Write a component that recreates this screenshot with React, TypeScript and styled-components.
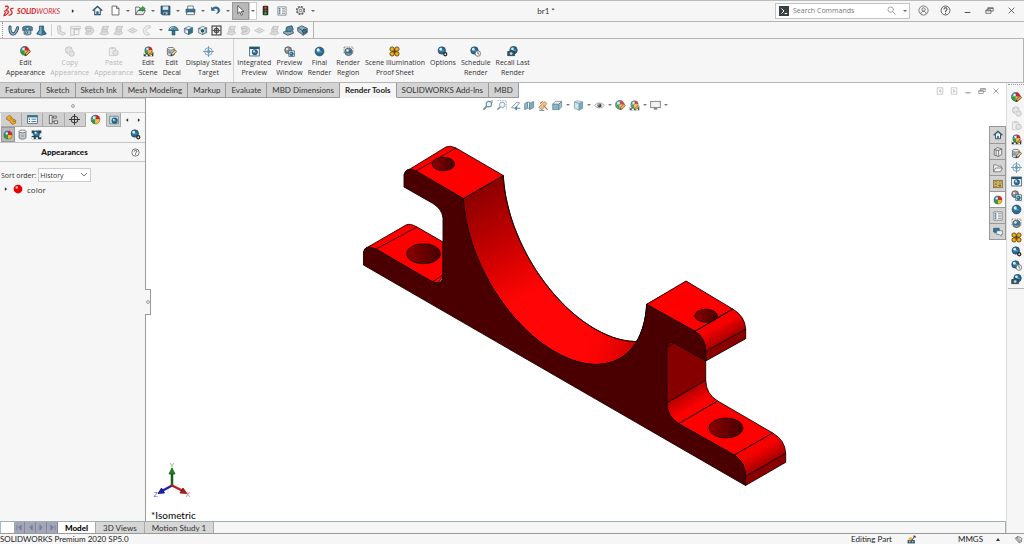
import React from "react";
import styled, { createGlobalStyle, css } from "styled-components";

const ink = "#333";
const line = "#b4b4b4";
const panel = "#f6f6f6";
const blue = "#2f7396";

const Global = createGlobalStyle`
  * { box-sizing: border-box; }
  html, body { margin: 0; padding: 0; background: #fff; }
  body, button, input, select { font-family: "Open Sans", "Noto Sans", sans-serif; font-size: 7px; color: ${ink}; }
  button { border: 0; padding: 0; margin: 0; background: none; }
  svg { display: block; }
`;

const labelFont = css`font-family: Lato, "Open Sans", sans-serif; font-size: 8px;`;

/* ---------- icons, all on a 16 unit grid ---------- */

const Ball = ({ x = 8, y = 8, r = 6 }: { x?: number; y?: number; r?: number }) => (
  <g>
    <circle cx={x} cy={y} r={r} fill="#2a6990" stroke="#173a52" strokeWidth="0.8" />
    <path d={`M${x - r * 0.7} ${y + r * 0.2}a${r * 0.8} ${r * 0.8} 0 0 1 ${r * 1.4} 0z`} fill="#4c9cc4" />
    <circle cx={x - r * 0.3} cy={y - r * 0.35} r={r * 0.35} fill="#dff0f8" />
  </g>
);
const ColorBall = ({ x = 8, y = 8, r = 6 }: { x?: number; y?: number; r?: number }) => (
  <g>
    <path d={`M${x} ${y}V${y - r}A${r} ${r} 0 0 0 ${x - r} ${y}z`} fill="#2e86b8" />
    <path d={`M${x} ${y}V${y - r}A${r} ${r} 0 0 1 ${x + r} ${y}z`} fill="#dd2222" />
    <path d={`M${x} ${y}H${x - r}A${r} ${r} 0 0 0 ${x} ${y + r}z`} fill="#2f9c3c" />
    <path d={`M${x} ${y}H${x + r}A${r} ${r} 0 0 1 ${x} ${y + r}z`} fill="#f2c02c" />
    <circle cx={x} cy={y} r={r} fill="none" stroke="#444" strokeWidth="0.7" />
    <circle cx={x - r * 0.3} cy={y - r * 0.4} r={r * 0.3} fill="#fff" opacity="0.85" />
  </g>
);
const Pencil = ({ body = "#e9a13b" }: { body?: string }) => (
  <g>
    <path d="M7 14l1-3.500 5-5 2.500 2.500-5 5z" fill={body} stroke="#333" strokeWidth="0.9" />
    <path d="M7 14l.8-2.500 1.700 1.700z" fill="#222" />
  </g>
);
const Cube = ({ front = "#a8cbdc", side = blue, top = "#e3eef3", edge = "#3c5766" }) => (
  <g stroke={edge} strokeWidth="0.9" strokeLinejoin="round">
    <path d="M2 5l6-3 6 2-6 3z" fill={top} />
    <path d="M2 5l6 2v7l-6-3z" fill={front} />
    <path d="M8 7l6-3v7l-6 3z" fill={side} />
  </g>
);

const icons: Record<string, React.ReactNode> = {
  home: <g fill="none" stroke="#3b4a54" strokeWidth="1.500"><path d="M4 7v7h8V7" fill="#fff" /><path d="M1 8.500L8 2l7 6.500" stroke="#29536c" strokeWidth="2" /><path d="M7 14v-4h2v4" fill={blue} stroke={blue} /></g>,
  page: <path d="M3 1.500h6.500L13 5v9.500H3zM9.500 1.500V5H13" fill="#fff" stroke="#555" strokeWidth="1.200" />,
  open: <g stroke="#444" strokeWidth="1.100"><path d="M1 14V3h5l1.500 2H12v3" fill="#fff" /><path d="M1 14l3-6h11l-3 6z" fill="#e6e6e6" /><path d="M6 8c0-3 2-4 5-4V2l4 3.500L11 9V7c-2 0-3.500.3-5 1z" fill="#3fae49" stroke="#27752f" /></g>,
  save: <g><path d="M1.500 1.500h13v13h-11l-2-2z" fill="#2c6583" stroke="#24404f" /><path d="M4 2h8v5H4z" fill="#dfeaf0" /><path d="M5 10h6v4H5z" fill="#a9bdc8" /><path d="M6 11h2v3H6z" fill="#24404f" /></g>,
  print: <g stroke="#2f4a58" strokeWidth="1"><path d="M4 6V1.500h8V6" fill="#fff" /><path d="M1.500 6h13v5h-13z" fill="#387a9d" /><path d="M3 10h10l1 4H2z" fill="#fff" /></g>,
  undo: <path d="M2 3v5h5L5.300 6.300C8 4 12 5.500 11.500 9c-.2 1.500-1 2.500-2.500 3.500 3.500-.5 5.500-2.500 5.300-5C14 3 8 1 3.800 4.500z" fill="#2e6d93" stroke="#1f4d69" strokeWidth="0.600" />,
  cursor: <path d="M4 1v11.500l3-2.500 2 5 2-1-2-4.500h4z" fill="#fff" stroke="#333" strokeWidth="1" />,
  traffic: <g><rect x="4" y="1" width="8" height="14" rx="1.500" fill="#2b2b2b" /><circle cx="8" cy="4" r="1.900" fill="#e33a2d" /><circle cx="8" cy="8" r="1.600" fill="#8a7a26" /><circle cx="8" cy="12" r="1.900" fill="#35a847" /></g>,
  list: <g><rect x="1.500" y="1.500" width="13" height="13" fill="#fff" stroke="#4d5a62" /><path d="M2 2h4v12H2z" fill="#b9d0dc" /><path d="M3 4.500h2M3 8h2M3 11.500h2" stroke="#24536d" strokeWidth="1.500" /><path d="M8 4.500h5M8 8h5M8 11.500h5" stroke="#555" strokeWidth="1.200" /></g>,
  tree: <g><rect x="1" y="2" width="14" height="12" fill="#fff" stroke="#24536d" /><path d="M1 2h14v3H1z" fill="#2f7396" /><path d="M2.500 7.500h2M2.500 11h2" stroke="#24536d" strokeWidth="1.600" /><path d="M6.500 7.500h7M6.500 11h7" stroke="#2f7396" strokeWidth="1.400" /></g>,
  gear: <g fill="none" stroke="#555"><circle cx="8" cy="8" r="5.700" strokeWidth="2" strokeDasharray="2.600 1.900" /><circle cx="8" cy="8" r="4.600" strokeWidth="1" /><circle cx="8" cy="8" r="1.800" strokeWidth="1.200" /></g>,
  user: <g fill="none" stroke="#555" strokeWidth="1.100"><circle cx="8" cy="8" r="6.700" /><circle cx="8" cy="6.500" r="2.400" /><path d="M4 13c.5-5 7.500-5 8 0" /></g>,
  help: <g fill="none" stroke="#444" strokeWidth="1.200"><circle cx="8" cy="8" r="6.500" /><path d="M5.800 6.300c0-3 4.600-3 4.400-.1C10 8 8 7.800 8 10M8 11.200v1.400" strokeWidth="1.500" /></g>,
  min: <path d="M3 11.500h10" stroke="#444" strokeWidth="1.700" />,
  restore: <g fill="none" stroke="#444" strokeWidth="1.200"><path d="M1.500 7h9v6h-9zM1.500 8.500h9" /><path d="M5 7V3h9.500v6h-4M5 4.500h9.500" /></g>,
  close: <path d="M3 3l10 10M13 3L3 13" stroke="#444" strokeWidth="1.400" />,
  prompt: <g><rect x="0" y="0" width="16" height="16" fill="#3a3f42" /><path d="M4 4l4 4-4 4M9 12h4" fill="none" stroke="#fff" strokeWidth="1.600" /></g>,
  search: <g fill="none" stroke="#777" strokeWidth="1.200"><circle cx="6.500" cy="6.500" r="4.800" /><path d="M10 10l5 5" /></g>,
  dockL: <path d="M2.500 1.500h11v13h-11zM9.500 5v6L6 8z" fill="none" stroke="#777" />,
  dockR: <path d="M2.500 1.500h11v13h-11zM7 5v6l3.500-3z" fill="none" stroke="#777" />,

  clip: <g fill="none" strokeLinecap="round"><path d="M3 3c-1 8 3 12 7 9 3-3 3-5 4-8" stroke="#31505f" strokeWidth="4.500" /><path d="M3 3c-1 8 3 12 7 9 3-3 3-5 4-8" stroke="#7fb0c8" strokeWidth="1.800" /></g>,
  sweep: <g stroke="#2b4a5a"><path d="M1 3c4-2 10-2 14 0v5c-4-2-10-2-14 0z" fill="#4c8dac" /><path d="M3 8c3-1 7-1 10 0v5c-3 2-7 2-10 0z" fill="#8fb9cd" /><path d="M6 4h4v3H6zM5 10h3v2H5z" fill="#fff" /></g>,
  loft: <g stroke="#24475a"><path d="M5 1.500h6V7l4 6-7 2-7-2 4-6z" fill="#2f7396" /><path d="M6 2h2v12l-5-1.500 3-5z" fill="#7fb0c8" stroke="none" /></g>,
  ghostA: <g fill="#e4e4e4" stroke="#b8b8b8"><path d="M2 2l3-1 1 8 8 3-3 3-8-3z" /><path d="M5 1l2 1v6" /></g>,
  ghostB: <g fill="#f2f2f2" stroke="#bbb"><path d="M1 2h14v4H6v9H1zM6 6h7v8H6zM1 5h14" /></g>,
  ghostC: <g fill="#dedede" stroke="#b5b5b5"><path d="M2 3c6-3 12 0 12 5s-6 7-12 5l1-3c3 1 6 0 6-3S6 4 2 6z" /><path d="M3 5h7v4H3z" /></g>,
  ghostD: <g fill="#dedede" stroke="#b8b8b8"><path d="M6 2h8l-2 4v3l2 3-5 2.500L1 13l3-3V6z" /><path d="M6 2v5l6-1M4 10h6l2-1" /></g>,
  ghostE: <g fill="#e8e8e8" stroke="#bdbdbd"><path d="M1 8l7-4 7 4-7 4z" /><path d="M4.500 10l7-4M4.500 6l7 4" /></g>,
  ghostF: <path d="M12 1C4 0 1 6 2 10s5 6 9 4l-2-3c-5 0-5-6 3-7z" fill="#ececec" stroke="#bdbdbd" />,
  dome: <g stroke="#24475a"><path d="M1 8c1-8 13-8 14 0z" fill="#4d91b1" /><path d="M6 8h4v6.500H6z" fill="#2f7396" /><path d="M3 6c2-3 4-3 5-3" stroke="#fff" fill="none" /></g>,
  cube: <g><Cube /><path d="M4 8l3 1v3l-3-1z" fill="#fff" /></g>,
  hole: <g><Cube front="#d5dde1" side="#87a9b9" /><circle cx="8" cy="8.500" r="3.200" fill="#24536d" stroke="#fff" /></g>,
  wrap: <g fill="none" stroke="#333"><rect x="1.500" y="1.500" width="13" height="13" strokeWidth="1.500" fill="#eee" /><circle cx="8" cy="8" r="3.500" strokeWidth="1.200" fill="#999" /><path d="M8 2v12M2 8h12" /></g>,
  slab: <g stroke="#2b3f4a"><path d="M1 10l9-2 5 2-8 4z" fill="#fff" /><path d="M5 3l8-2 2 6-5 3-6-1z" fill="#4b8aa8" /><path d="M1 10v2l6 3 8-3v-2" fill="#8fa8b4" /></g>,
  block: <g stroke="#2b3f4a"><path d="M1 4l6-3 8 4v6l-6 4-8-6z" fill="#86afc2" /><path d="M1 4l8 5v6M9 9l6-4" fill="none" /><circle cx="11" cy="9" r="3" fill={blue} /></g>,

  appearance: <g><ColorBall x={7} y={7} r={6.500} /><Pencil /></g>,
  ghostBall: <g><circle cx="7" cy="6" r="5" fill="#d8d8d8" stroke="#bbb" /><circle cx="11" cy="11" r="4" fill="#e2e2e2" stroke="#bbb" /><path d="M7 1v10M2 6h10" stroke="#f4f4f4" /></g>,
  ghostPaste: <g><path d="M2 3h9v11H2z" fill="#eee" stroke="#c4c4c4" /><path d="M4 1.500h5v3H4z" fill="#d0d0d0" /><circle cx="11" cy="10" r="4" fill="#e2e2e2" stroke="#bbb" /></g>,
  scene: <g><path d="M1 10h14v5H1z" fill="#333" /><path d="M1 10h3v2H1zM7 10h3v2H7zM4 12.500h3V15H4zM10 12.500h3V15h-3z" fill="#fff" /><ColorBall y={6.500} r={5.500} /><path d="M8 13l5-5 2 2-5 4z" fill="#e9a13b" stroke="#333" strokeWidth="0.700" /></g>,
  decal: <g><path d="M2 4v8c0 3 10 3 10 0V4" fill="#d2d8dc" stroke="#444" /><ellipse cx="7" cy="4" rx="5" ry="2" fill="#f4f4f4" stroke="#444" /><path d="M3 7h5v4H3z" fill="#7d9dad" /><Pencil body="#eac680" /></g>,
  target: <g fill="none" stroke="#4b87a6"><circle cx="8" cy="8" r="5.500" strokeWidth="1" /><circle cx="8" cy="8" r="2.200" strokeWidth="1" /><path d="M8 0v16M0 8h16" strokeWidth="1" /></g>,
  integrated: <g><rect x="1" y="1.500" width="14" height="13" fill="#fff" stroke="#24536d" strokeWidth="1.200" /><path d="M1 1.500h14v3H1z" fill="#24536d" /><Ball x={8.500} y={9} r={4} /></g>,
  preview: <g><circle cx="6" cy="6" r="5" fill="#8b9298" stroke="#444" /><circle cx="4.500" cy="4.500" r="1.600" fill="#eee" /><rect x="7" y="7" width="8" height="8" fill="#dcebf2" stroke="#24536d" /><Ball x={11} y={11.500} r={2.600} /></g>,
  ball: <Ball r={6.500} />,
  region: <g><rect x="1.500" y="1.500" width="13" height="9" fill="none" stroke="#555" strokeDasharray="2 1.500" /><circle cx="8" cy="8.500" r="5.500" fill="#8d959b" stroke="#444" /><path d="M3.500 5.500h9v5h-9z" fill="#2c7196" /><circle cx="6.500" cy="6.500" r="1.800" fill="#e5f1f6" /></g>,
  proof: <g fill="#eeb021" stroke="#4a3000" strokeWidth="1.100"><circle cx="4.500" cy="4.500" r="3.200" /><circle cx="11.500" cy="4.500" r="3.200" /><circle cx="4.500" cy="11.500" r="3.200" /><circle cx="11.500" cy="11.500" r="3.200" /><path d="M5 8h6M8 5v6" /></g>,
  options: <g><Ball x={7} y={6.500} r={5.500} /><circle cx="12" cy="12" r="2.300" fill="#ddd" stroke="#222" strokeWidth="1.700" /></g>,
  schedule: <g><Ball x={6.500} y={6.500} r={5.500} /><circle cx="11.500" cy="11" r="4" fill="#f4f4f4" stroke="#555" /><path d="M11.500 8.500V11l2 1" fill="none" stroke="#333" /></g>,
  recall: <g><Ball x={9.500} y={6} r={5.500} /><path d="M1 8h4l1-1.500h2L9 8h2v6H1z" fill="#35586b" stroke="#1d3440" /><circle cx="6" cy="11" r="2" fill="#b9d6e4" /></g>,

  part: <g fill="#efb22d" stroke="#8a5a00"><path d="M1 5l4-3 3 2 1 3 5 2v4l-4 2-3-2-1-3-5-2z" /><path d="M5 6l3 2M9 10l4 1" /></g>,
  config: <g fill="none" stroke="#555" strokeWidth="1.200"><path d="M2 2h4v12H2zM8 3h4v3H8zM9 10h5v4H9zM6 5h2M6 11h3" fill="#eee" /></g>,
  dim: <g fill="none" stroke="#333" strokeWidth="1.400"><circle cx="8" cy="8" r="5" /><path d="M8 0v16M0 8h16" /></g>,
  cam: <g><path d="M1 2h14v12H1z" fill="#cfe0e8" stroke="#3e6b82" /><Ball x={9} y={9} r={4.500} /></g>,
  cyl: <g><path d="M3 3.500v9c0 3 10 3 10 0v-9" fill="#c9ced2" stroke="#555" /><ellipse cx="8" cy="3.500" rx="5" ry="2" fill="#f4f4f4" stroke="#555" /><path d="M5.500 8h5v4h-5z" fill="#9db6c2" /></g>,
  sceneBlue: <g><path d="M1 2h14v13H1z" fill="#dbe7ed" /><path d="M1 2h4v4H1zM10 2h5v4h-5zM1 10h14v5H1z" fill="#2b4350" /><path d="M1 12h3v3H1zM7 12h3v3H7zM12 10h3v2h-3z" fill="#fff" /><Ball y={7} r={4.500} /></g>,
  bookBox: <g fill="#ededed" stroke="#444"><path d="M2 4l5-3 7 2v9l-5 3-7-2zM2 4l7 2 5-3M9 6v9M5 5v9" /></g>,
  folder: <path d="M1 14V3h5l1.500 2H13v3M1 14l3-6h11l-3 6z" fill="#f2f2f2" stroke="#555" />,
  palette: <g><rect x="1" y="2" width="14" height="12" fill="#f0bd3a" stroke="#6d531b" /><path d="M3 4h3v3H3zM10 4h3v3h-3zM3 9h3v3H3z" fill="#fff" stroke="#555" /><path d="M9 9h4v3H9z" fill={blue} /></g>,
  chat: <g><path d="M1 2h9v6H5l-2 2V8H1z" fill="#2f7396" stroke="#24536d" /><path d="M6 6h9v6h-2v3l-3-3H6z" fill="#f2f6f8" stroke="#44687a" /></g>,

  zoomFit: <g fill="none" stroke="#557a8d" strokeWidth="1.600"><circle cx="10" cy="6" r="4" fill="#e7f1f6" /><path d="M7 9l-5 5" strokeWidth="2.400" /><path d="M13 1h2v3" strokeWidth="1" /></g>,
  zoomArea: <g fill="none" stroke="#6b8b9b" strokeWidth="1.200"><path d="M2 1h13v13" strokeDasharray="2 1.500" /><circle cx="9" cy="7" r="4" fill="#e7f1f6" /><path d="M6 10l-4 4" strokeWidth="2.200" /></g>,
  prevView: <g fill="none" stroke="#718893" strokeWidth="1.300"><path d="M2 11l8-8 4 1-6 8z" fill="#f2f2f2" /><path d="M15 12H8M10 9.500L7.500 12l2.500 2.500" stroke={blue} strokeWidth="1.800" /></g>,
  section: <g stroke="#3f5f6e"><path d="M1 5l4-2v9l-4 2z" fill="#7fb3cb" /><path d="M8 5l6-3v9l-6 3z" fill="#5ba2c3" /><path d="M5 3h3v9H5z" fill="#e6eef2" /></g>,
  dynamic: <g><path d="M1 11L9 2l4 3-7 9z" fill="#e9b877" stroke="#a66b2c" /><path d="M8 8l6 6M3 5l4-3" stroke="#c8552b" strokeWidth="1.700" /><path d="M2 15h7" stroke={blue} strokeWidth="1.500" /></g>,
  orient: <g stroke="#46636f"><path d="M1 6h9v8H1z" fill="#6aacc9" /><path d="M1 6l4-4h9l-4 4z" fill="#e6eef2" /><path d="M10 6l4-4v8l-4 4z" fill="#9bb9c6" /></g>,
  style: <g stroke="#567f92"><path d="M2 3l5-2 7 2-5 2z" fill="#e2eef4" /><path d="M2 3l7 2v10l-7-3z" fill="#c9dfe9" /><path d="M9 5l5-2v9l-5 3z" fill="#5a9bb9" /></g>,
  eye: <g><path d="M1 8c3-5 11-5 14 0-3 4.500-11 4.500-14 0z" fill="#eee" stroke="#777" /><circle cx="8" cy="8" r="3" fill="#333" /><circle cx="7" cy="7" r="1" fill="#fff" /></g>,
  monitor: <g><rect x="1" y="2" width="14" height="9" fill="#eef2f4" stroke="#666" strokeWidth="1.300" /><path d="M6 11h4l1 3H5z" fill="#777" /></g>,
  red: <g><circle cx="8" cy="8" r="7" fill="#e80000" /><circle cx="6" cy="5.500" r="2" fill="#ffb3b3" /></g>,
  right: <path d="M5 3l6 5-6 5z" fill="#333" />,
  left: <path d="M11 3L5 8l6 5z" fill="#333" />,
  rebuild: <g><path d="M1 9h13v6H1z" fill="#3a5c6d" /><path d="M3 5l5-1 2 3-3 3-4-1z" fill="#f0b429" /><path d="M8 10l6-8M11 2h3.500v3" stroke="#222" strokeWidth="1.500" fill="none" /><path d="M4 11h2v2H4zM9 11h2v2H9z" fill="#e8e8e8" /></g>,
  tag: <g fill="#ddd" stroke="#444"><path d="M2 6l5-4 7 4-1 6-4 2z" /><circle cx="6" cy="5.500" r="1.300" /><path d="M8 8l4 2M7 10l3 2" /></g>,
};

const Icon = ({ name, size = 11 }: { name: string; size?: number }) => (
  <svg width={size} height={size} viewBox="0 0 16 16" aria-hidden="true">{icons[name]}</svg>
);

/* ---------- shell ---------- */

const Shell = styled.div`
  min-height: 100vh;
  display: flex;
  flex-direction: column;
  background: ${panel};
  overflow: hidden;
`;
const TitleBar = styled.header`
  height: 22px;
  display: flex;
  align-items: center;
  border-top: 1px solid #bbb;
  border-bottom: 1px solid ${line};
  padding: 0 5px 1px 0;
`;
const Brand = styled.div`
  width: 68px;
  padding-left: 3px;
  display: flex;
  align-items: center;
  gap: 3px;
  color: #d5262c;
  font: italic 7px Lato, sans-serif;
  b { font-weight: 900; }
`;
const ToolButton = styled.button<{ $w?: number; $h?: number; $active?: boolean }>`
  flex: none;
  width: ${(p) => p.$w ?? 16}px;
  height: ${(p) => p.$h ?? 16}px;
  display: flex;
  align-items: center;
  justify-content: center;
  ${(p) => p.$active && css`background: #b8b8b8; outline: 1px solid #999; outline-offset: -1px;`}
`;
const CaretButton = styled.button<{ $boxed?: boolean; $w?: number }>`
  flex: none;
  width: ${(p) => p.$w ?? 9}px;
  height: ${(p) => (p.$boxed ? 18 : 12)}px;
  display: flex;
  align-items: center;
  justify-content: center;
  ${(p) => p.$boxed && css`border: 1px solid #ccc; background: #fff;`}
  &::after { content: ""; border: 2px solid transparent; border-top-color: #666; border-bottom: 0; }
`;
const Spacer = styled.span<{ $w: number }>`flex: none; width: ${(p) => p.$w}px;`;
const DocTitle = styled.div`flex: 1; text-align: center; ${labelFont}`;
const SearchBox = styled.label`
  width: 135px;
  height: 16px;
  display: flex;
  align-items: center;
  gap: 4px;
  padding-left: 3px;
  background: #fff;
  border: 1px solid #c4c4c4;
`;
const SearchInput = styled.input`
  flex: 1;
  min-width: 0;
  border: 0;
  padding: 0;
  background: none;
  outline: 0;
  &::placeholder { color: #777; opacity: 1; }
`;
const WindowButtons = styled.div`display: flex; gap: 6px; padding-left: 5px;`;

const FeatureBar = styled.div`
  height: 17px;
  display: flex;
  border-bottom: 1px solid ${line};
`;
const FeatureGroup = styled.div`
  width: 312px;
  display: flex;
  align-items: center;
  justify-content: space-between;
  margin-left: 2px;
  padding: 0 3px;
  border-left: 1px dotted #999;
  border-right: 1px solid ${line};
`;
const Rule = styled.span<{ $h: number; $m?: number }>`
  flex: none;
  width: 1px;
  height: ${(p) => p.$h}px;
  margin: 0 ${(p) => p.$m ?? 0}px;
  background: #cfcfcf;
`;

const Ribbon = styled.nav`
  height: 44px;
  display: flex;
  align-items: flex-start;
  padding: 0 3px;
  border-bottom: 1px solid ${line};
  border-right: 1px solid ${line};
`;
const RibbonButton = styled.button`
  flex: none;
  padding: 7px 2px 0 3px;
  display: flex;
  flex-direction: column;
  align-items: center;
  gap: 1px;
  line-height: 10px;
  white-space: pre-line;
  &:disabled { color: #b8b8b8; }
`;

const Body = styled.div`flex: 1; display: flex; min-height: 0;`;
const Main = styled.div`flex: 1; min-width: 0; display: flex; flex-direction: column;`;
const TabRow = styled.div`
  height: 15px;
  display: flex;
  background: #fff;
`;
const Tab = styled.button<{ $active?: boolean }>`
  flex: none;
  padding: 0 5px;
  background: #d3d3d3;
  border-right: 1px solid #999;
  border-bottom: 1px solid #999;
  line-height: 12px;
  ${labelFont}
  ${(p) => p.$active && css`background: ${panel}; border-bottom-color: ${panel}; font-weight: 700; color: #222;`}
`;
const DocButtons = styled.div`margin-left: auto; display: flex; padding-right: 3px; opacity: 0.75;`;

const Work = styled.div`flex: 1; display: flex; min-height: 0;`;
const Side = styled.aside`
  position: relative;
  z-index: 1;
  flex: none;
  width: 146px;
  border-right: 1px solid #999;
  background: ${panel};
`;
const SideGrip = styled.div`
  height: 15px;
  display: grid;
  place-items: center;
  border-top: 1px solid #c9d3d8;
  border-bottom: 1px solid #ccc;
`;
const Dot = styled.i`width: 4px; height: 4px; border-radius: 50%; border: 1px solid #aaa; background: #ddd;`;
const SplitHandle = styled.button`
  position: absolute;
  left: 100%;
  top: 191px;
  width: 6px;
  height: 26px;
  display: grid;
  place-items: center;
  background: ${panel};
  border: 1px solid #999;
  border-left: 0;
`;
const SideTabs = styled.div`display: flex; height: 14px; padding-left: 1px;`;
const SideTab = styled.button<{ $active?: boolean; $narrow?: boolean }>`
  flex: ${(p) => (p.$narrow ? "0 1 14px" : "1 1 21px")};
  min-width: 0;
  display: grid;
  place-items: center;
  background: ${(p) => (p.$active ? panel : "#d0d0d0")};
  border-right: 1px solid #aaa;
  border-bottom: 1px solid ${(p) => (p.$active ? panel : "#aaa")};
`;
const SideTools = styled.div`
  display: flex;
  align-items: center;
  height: 16px;
  padding: 0 2px 0 1px;
  border-bottom: 1px solid #c4c4c4;
  > :last-child { margin-left: auto; }
`;
const SideHead = styled.div`
  display: flex;
  align-items: center;
  height: 19px;
  padding-right: 2px;
  border-bottom: 1px solid #c4c4c4;
  h2 { flex: 1; margin: 0; padding-left: 2px; text-align: center; ${labelFont} font-weight: 900; color: #111; }
`;
const SortRow = styled.label`
  display: flex;
  align-items: center;
  gap: 2px;
  padding: 6px 0 0 1px;
`;
const SortSelect = styled.select`
  width: 53px;
  height: 14px;
  padding: 0 1px;
  background: #fff;
  border: 1px solid #ccc;
  appearance: none;
`;
const SelectWrap = styled.span`
  display: grid;
  align-items: center;
  > * { grid-area: 1 / 1; }
  > svg { justify-self: end; margin-right: 4px; pointer-events: none; }
`;
const TreeRow = styled.button`
  display: flex;
  align-items: center;
  gap: 4px;
  height: 14px;
  padding-left: 3px;
  font-size: 8px;
`;

const Canvas = styled.main`
  position: relative;
  flex: 1;
  min-width: 0;
  background: #fff;
`;
const ModelSvg = styled.svg`width: 100%; height: 100%;`;
const Hud = styled.div`
  position: absolute;
  top: 1px;
  left: 0;
  right: 3px;
  display: flex;
  justify-content: center;
  opacity: 0.85;
`;
const TaskTabs = styled.div`
  position: absolute;
  right: 0;
  top: 28px;
  width: 17px;
  border: 1px solid #999;
`;
const TaskTab = styled.button<{ $active?: boolean }>`
  width: 100%;
  height: 16px;
  display: grid;
  place-items: center;
  background: ${(p) => (p.$active ? "#fff" : "#d3d3d3")};
  & + & { border-top: 1px solid #999; }
`;
const Triad = styled.svg`position: absolute; left: 4px; bottom: 16px;`;
const ViewName = styled.div`
  position: absolute;
  left: 5px;
  bottom: 0;
  font: 10px/11px Lato, sans-serif;
  color: #000;
`;

const SheetRow = styled.div`
  height: 12px;
  display: flex;
  border-top: 1px solid #9fb0b0;
  border-right: 1px solid #9fb0b0;
`;
const SheetLead = styled.span`width: 14px; background: #fff; border-left: 1px solid #9fc0c8;`;
const SheetNav = styled.button`
  width: 11px;
  display: grid;
  place-items: center;
  background: #a3a5ba;
  border-right: 1px solid #85879b;
`;
const SheetTab = styled.button<{ $active?: boolean }>`
  padding: 0 7px;
  line-height: 10px;
  ${labelFont}
  background: #d6d6d6;
  border-right: 1px solid #aaa;
  ${(p) => p.$active && css`background: #fff; font-weight: 900; color: #000;`}
`;

const RightBar = styled.div`
  flex: none;
  width: 18px;
  padding-left: 1px;
  border-left: 1px solid #ddd;
`;
const RightTools = styled.div`
  margin-top: 1px;
  padding: 5px 0 2px;
  display: flex;
  flex-direction: column;
  border-top: 1px dotted #999;
  border-bottom: 1px solid ${line};
`;
const Status = styled.footer`
  height: 11px;
  display: flex;
  align-items: center;
  border-top: 1px solid #999;
  ${labelFont}
  line-height: 10px;
  white-space: nowrap;
  color: #222;
`;
const StatusRight = styled.div`
  margin-left: auto;
  display: flex;
  align-items: center;
  svg { margin: 0 1px; }
`;

/* ---------- the bracket ---------- */

type Pt = [number, number];
const depth: Pt = [40, -23];

/* Points of a circle that lies in the isometric front plane. */
const isoArc = (cx: number, cy: number, r: number, from: number, to: number): Pt[] =>
  Array.from({ length: 49 }, (_, i) => {
    const t = ((from + ((to - from) * i) / 48) * Math.PI) / 180;
    return [cx + r * 0.866 * Math.cos(t), cy + r * (0.5 * Math.cos(t) + Math.sin(t))];
  });
const toLine = (pts: Pt[]) => pts.map(([x, y]) => `${x.toFixed(1)} ${y.toFixed(1)}`).join("L");

const front = isoArc(555, 246, 106, 177, 3);
const back = front.map(([x, y]): Pt => [x + depth[0], y + depth[1]]);

const Bracket = () => (
  <ModelSvg viewBox="146 98 860 423" role="img" aria-label="Red bracket, isometric view">
    <defs>
      <linearGradient id="bore" gradientUnits="userSpaceOnUse" x1="478" y1="190" x2="545" y2="318">
        <stop offset="0" stopColor="#8c0000" /><stop offset="0.400" stopColor="#c40000" /><stop offset="0.800" stopColor="#ff0505" />
      </linearGradient>
      <linearGradient id="boreEnd" gradientUnits="userSpaceOnUse" x1="585" y1="340" x2="640" y2="352">
        <stop offset="0" stopColor="#ff0000" stopOpacity="0" /><stop offset="1" stopColor="#b80000" />
      </linearGradient>
      <linearGradient id="hole"><stop offset="0" stopColor="#8e0000" /><stop offset="1" stopColor="#450000" /></linearGradient>
      <linearGradient id="fillet" gradientUnits="userSpaceOnUse" x1="712" y1="317" x2="727" y2="343">
        <stop offset="0" stopColor="#ff0000" /><stop offset="0.400" stopColor="#f40000" /><stop offset="1" stopColor="#950000" />
      </linearGradient>
      <linearGradient id="filletLow" gradientUnits="userSpaceOnUse" x1="752" y1="441" x2="767" y2="467">
        <stop offset="0" stopColor="#ff0000" /><stop offset="0.400" stopColor="#f40000" /><stop offset="1" stopColor="#950000" />
      </linearGradient>
      <linearGradient id="cove" gradientUnits="userSpaceOnUse" x1="684" y1="390" x2="698" y2="414">
        <stop offset="0" stopColor="#a80000" /><stop offset="0.700" stopColor="#ff0000" />
      </linearGradient>
    </defs>
    <g stroke="#1c0000" strokeWidth="0.900" strokeLinejoin="round" fill="#ff0000">
      <path d={`M${toLine(front)}L${toLine([...back].reverse())}Z`} fill="url(#bore)" />
      <path d={`M${toLine(front)}L${toLine([...back].reverse())}Z`} fill="url(#boreEnd)" />

      <path d="M364 252Q364 249 368 247L406 225Q410 223 417 227L443 242V277L438 283L432 282L376 249Z" />
      <path d="M376 249L417 227M432 282L443 275" fill="none" />
      <ellipse cx="423.500" cy="253.700" rx="17" ry="10" fill="url(#hole)" />

      <path d="M404 175Q405 170 410 169L446 147Q450 145 456 148L503.300 175.500L463.300 198.500L416 171Z" />
      <path d="M416 171L456 148" fill="none" />
      <ellipse cx="443.400" cy="164" rx="11.300" ry="6.700" fill="url(#hole)" />

      <path d="M646.700 304.300L686 281L732.700 309L695 331.300Z" />
      <path d="M695 331.300L732.700 309Q745 316 745.700 329.300L705.700 351.500Q705 337 695 331.300Z" fill="url(#fillet)" />
      <path d="M705.700 351.500L745.700 329.300V338.700L705.700 361Z" fill="#8a0000" />
      <ellipse cx="706" cy="315.700" rx="11.300" ry="6.500" fill="url(#hole)" />
      <path d="M695 331.300L732.700 309" fill="none" />

      <path d="M666.700 338L680 340L705.700 354V380.300L666.700 403Z" fill="#870000" />
      <path d="M666.700 403L705.700 380.300Q706 394 717.700 401L678.700 423.700Q667 416 666.700 403Z" fill="url(#cove)" />
      <path d="M678.700 423.700L717.700 401L772.700 433L734.300 455Z" />
      <path d="M734.300 455L772.700 433Q785 440 785.700 453.300L745.500 476.700Q745 462 734.300 455Z" fill="url(#filletLow)" />
      <path d="M745.500 476.700L785.700 453.300V462.300L745.500 485.500Z" fill="#8a0000" />
      <ellipse cx="726" cy="428" rx="17" ry="10" fill="url(#hole)" />

      <path
        fill="#4a0000"
        d={`M${toLine(front)}L695 331.300Q705.700 338 705.700 351V361L675 343.500Q667 340 666.700 348V403Q667 417 678.700 423.700L734.300 455Q745.500 462 745.500 477V485.500L363.500 265V252Q365 244 376 249L432 281.500Q443 286 443 275V218Q442 209 433 203.500L404 187V175Q406 166 416 171Z`}
      />
      <path d="M666.700 347L674 343" fill="none" />
    </g>
  </ModelSvg>
);

const tools: [string, string][] = [
  ["appearance", "Edit\nAppearance"], ["ghostBall", "Copy\nAppearance"], ["ghostPaste", "Paste\nAppearance"],
  ["scene", "Edit\nScene"], ["decal", "Edit\nDecal"], ["target", "Display States\nTarget"],
  ["integrated", "Integrated\nPreview"], ["preview", "Preview\nWindow"], ["ball", "Final\nRender"],
  ["region", "Render\nRegion"], ["proof", "Scene Illumination\nProof Sheet"], ["options", "Options"],
  ["schedule", "Schedule\nRender"], ["recall", "Recall Last\nRender"],
];
const tabs = ["Features", "Sketch", "Sketch Ink", "Mesh Modeling", "Markup", "Evaluate", "MBD Dimensions", "Render Tools", "SOLIDWORKS Add-Ins", "MBD"];
const features = ["clip", "sweep", "loft", "|", "ghostA", "ghostB", "ghostC", "ghostD", "ghostD", "ghostE", "ghostF", "v", "dome", "cube", "hole", "wrap", "ghostD", "ghostC", "ghostE", "ghostD", "slab", "block"];
const hud = ["zoomFit", "zoomArea", "prevView", "section", "dynamic", "orient", "v", "style", "v", "eye", "v", "appearance", "scene", "v", "monitor", "v"];
const taskTabs = ["home", "bookBox", "folder", "palette", "color", "list", "chat"];
icons.color = <ColorBall r={6.500} />;

export default function App() {
  return (
    <Shell>
      <Global />
      <TitleBar>
        <Brand>
          <svg width="11" height="12" viewBox="0 0 22 24" fill="none" stroke="#d5262c" strokeWidth="2.600" aria-hidden="true">
            <path d="M4 3c8-2 9 3 2 7M2 13c8-4 11 0 7 4-2 3-4 4-7 4l3-7" />
            <path d="M21 7c-5-1-7 1-5 4s4 4 1 7-5 2-6 2" />
          </svg>
          <span><b>SOLID</b>WORKS</span>
        </Brand>
        <ToolButton $w={9} aria-label="Expand menu"><Icon name="right" size={6} /></ToolButton>
        <Spacer $w={12} />
        <ToolButton aria-label="Home"><Icon name="home" /></ToolButton>
        <Spacer $w={2} />
        {["page", "open", "save", "print", "undo"].map((n) => (
          <React.Fragment key={n}>
            <ToolButton aria-label={n}><Icon name={n} /></ToolButton>
            <CaretButton aria-label={`${n} menu`} />
          </React.Fragment>
        ))}
        <ToolButton $w={17} $h={18} $active aria-label="Select"><Icon name="cursor" /></ToolButton>
        <CaretButton $boxed $w={8} aria-label="Select menu" />
        <ToolButton aria-label="Rebuild"><Icon name="traffic" /></ToolButton>
        <Spacer $w={1} />
        <ToolButton aria-label="File properties"><Icon name="list" size={10} /></ToolButton>
        <Spacer $w={2} />
        <ToolButton aria-label="Settings"><Icon name="gear" /></ToolButton>
        <CaretButton aria-label="Settings menu" />
        <DocTitle>br1 *</DocTitle>
        <SearchBox>
          <Icon name="prompt" size={10} />
          <SearchInput aria-label="Search Commands" placeholder="Search Commands" />
          <Icon name="search" size={9} />
          <CaretButton aria-label="Search menu" />
        </SearchBox>
        <WindowButtons>
          {["user", "help", "min", "restore", "close"].map((n) => (
            <ToolButton key={n} aria-label={n}><Icon name={n} size={n === "user" || n === "help" ? 11 : 9} /></ToolButton>
          ))}
        </WindowButtons>
      </TitleBar>

      <FeatureBar>
        <FeatureGroup>
          {features.map((n, i) =>
            n === "|" ? <Rule key={i} $h={12} $m={2} /> : n === "v" ? <CaretButton key={i} $w={12} aria-label="More" /> : (
              <ToolButton key={i} $w={14} aria-label={n}><Icon name={n} /></ToolButton>
            )
          )}
        </FeatureGroup>
      </FeatureBar>

      <Ribbon>
        {tools.map(([n, label], i) => (
          <React.Fragment key={label}>
            {i === 6 && <Rule $h={43} />}
            <RibbonButton disabled={n.startsWith("ghost")}><Icon name={n} />{label}</RibbonButton>
          </React.Fragment>
        ))}
      </Ribbon>

      <Body>
        <Main>
          <TabRow>
            {tabs.map((t) => <Tab key={t} $active={t === "Render Tools"}>{t}</Tab>)}
            <DocButtons>
              {["dockL", "dockR", "min", "restore", "close"].map((n) => (
                <ToolButton key={n} $w={14} aria-label={n}><Icon name={n} size={8} /></ToolButton>
              ))}
            </DocButtons>
          </TabRow>

          <Work>
            <Side>
              <SideGrip><Dot /></SideGrip>
              <SideTabs>
                {["part", "tree", "config", "dim", "color"].map((n) => (
                  <SideTab key={n} $active={n === "color"} aria-label={n}><Icon name={n} /></SideTab>
                ))}
                <SideTab $narrow aria-label="Cameras"><Icon name="cam" size={10} /></SideTab>
                <ToolButton $w={12} $h={14} aria-label="Previous tab"><Icon name="left" size={6} /></ToolButton>
                <ToolButton $w={12} $h={14} aria-label="Next tab"><Icon name="right" size={6} /></ToolButton>
              </SideTabs>
              <SideTools>
                <ToolButton $w={14} $h={15} $active aria-label="Appearances"><Icon name="color" size={10} /></ToolButton>
                <ToolButton $w={14} $h={15} aria-label="Decals"><Icon name="cyl" /></ToolButton>
                <ToolButton $w={14} $h={15} aria-label="Scene"><Icon name="sceneBlue" /></ToolButton>
                <ToolButton $h={15} aria-label="Options"><Icon name="options" /></ToolButton>
              </SideTools>
              <SideHead>
                <h2>Appearances</h2>
                <ToolButton aria-label="Help"><Icon name="help" size={9} /></ToolButton>
              </SideHead>
              <SortRow>
                Sort order:
                <SelectWrap>
                  <SortSelect defaultValue="History"><option>History</option><option>Alphabetical</option></SortSelect>
                  <svg width="6" height="4" viewBox="0 0 6 4" fill="none" stroke="#777" aria-hidden="true"><path d="M0 0l3 3 3-3" /></svg>
                </SelectWrap>
              </SortRow>
              <TreeRow><Icon name="right" size={6} /><Icon name="red" size={10} />color</TreeRow>
              <SplitHandle aria-label="Collapse panel"><Dot /></SplitHandle>
            </Side>

            <Canvas>
              <Bracket />
              <Hud>
                {hud.map((n, i) => n === "v" ? <CaretButton key={i} $w={7} aria-label="More" /> : (
                  <ToolButton key={i} $w={14} $h={13} aria-label={n}><Icon name={n} /></ToolButton>
                ))}
              </Hud>
              <TaskTabs>
                {taskTabs.map((n) => <TaskTab key={n} $active={n === "color"} aria-label={n}><Icon name={n} size={10} /></TaskTab>)}
              </TaskTabs>
              <Triad width="44" height="44" viewBox="150 461 44 44" aria-hidden="true">
                <path d="M172 485.500V472" stroke="#126312" strokeWidth="2.500" />
                <path d="M172 468l-3 6h6z" fill="#1d8a1d" stroke="#0b400b" strokeWidth="0.700" />
                <path d="M172 485.500L183 491" stroke="#c11c1c" strokeWidth="2.500" />
                <path d="M187 493.500l-7-.5 3-5z" fill="#c11c1c" stroke="#600" strokeWidth="0.700" />
                <path d="M172 485.500L162 491" stroke="#2222b8" strokeWidth="2.500" />
                <path d="M158 493.500l3.500-5.500 3 5z" fill="#2222b8" stroke="#006" strokeWidth="0.700" />
                <circle cx="172" cy="485.500" r="1.500" fill="#b02020" />
                <g fontFamily="Liberation Sans, sans-serif" fontSize="7">
                  <text x="169.500" y="468" fill="#5fb85f">Y</text>
                  <text x="185.500" y="497" fill="#f06060">X</text>
                  <text x="153.500" y="497" fill="#5858e8">Z</text>
                </g>
              </Triad>
              <ViewName>*Isometric</ViewName>
            </Canvas>
          </Work>

          <SheetRow>
            <SheetLead />
            {["First", "Previous", "Next", "Last"].map((n, i) => (
              <SheetNav key={n} aria-label={n}>
                <svg width="7" height="7" viewBox="0 0 8 8" fill="#7d8096" stroke="#7d8096" aria-hidden="true">
                  {i < 2 ? <path d="M6 1L3 4l3 3z" /> : <path d="M2 1l3 3-3 3z" />}
                  {i === 0 && <path d="M1 1v6" />}{i === 3 && <path d="M7 1v6" />}
                </svg>
              </SheetNav>
            ))}
            <SheetTab $active>Model</SheetTab>
            <SheetTab>3D Views</SheetTab>
            <SheetTab>Motion Study 1</SheetTab>
          </SheetRow>
        </Main>

        <RightBar>
          <RightTools>
            {tools.map(([n, label]) => (
              <ToolButton key={label} $h={14} aria-label={label}><Icon name={n} /></ToolButton>
            ))}
          </RightTools>
        </RightBar>
      </Body>

      <Status>
        <span>SOLIDWORKS Premium 2020 SP5.0</span>
        <StatusRight>
          <span>Editing Part</span>
          <Spacer $w={14} /><Icon name="rebuild" size={9} /><Spacer $w={41} />
          <span>MMGS</span>
          <Spacer $w={12} />
          <svg width="4" height="3" viewBox="0 0 4 3" aria-hidden="true"><path d="M0 3l2-3 2 3z" fill="#333" /></svg>
          <Spacer $w={12} /><Icon name="tag" size={9} />
        </StatusRight>
      </Status>
    </Shell>
  );
}
